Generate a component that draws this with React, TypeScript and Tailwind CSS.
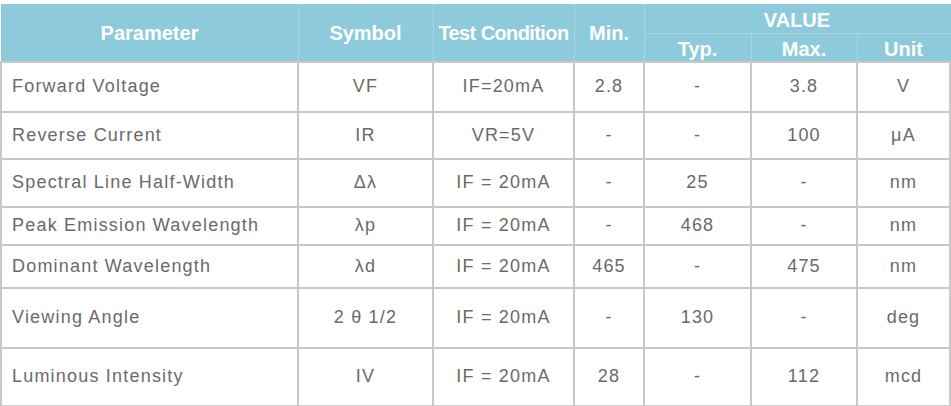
import React from 'react';

const rows = [
  { name: 'Forward Voltage', sym: 'VF', cond: 'IF=20mA', min: '2.8', typ: '-', max: '3.8', unit: 'V', h: 'h-[50px]' },
  { name: 'Reverse Current', sym: 'IR', cond: 'VR=5V', min: '-', typ: '-', max: '100', unit: 'μA', h: 'h-[47px]' },
  { name: 'Spectral Line Half-Width', sym: 'Δλ', cond: 'IF = 20mA', min: '-', typ: '25', max: '-', unit: 'nm', h: 'h-[48px]' },
  { name: 'Peak Emission Wavelength', sym: 'λp', cond: 'IF = 20mA', min: '-', typ: '468', max: '-', unit: 'nm', h: 'h-[38px]' },
  { name: 'Dominant Wavelength', sym: 'λd', cond: 'IF = 20mA', min: '465', typ: '-', max: '475', unit: 'nm', h: 'h-[43px]' },
  { name: 'Viewing Angle', sym: '2 θ 1/2', cond: 'IF = 20mA', min: '-', typ: '130', max: '-', unit: 'deg', h: 'h-[60px]' },
  { name: 'Luminous Intensity', sym: 'IV', cond: 'IF = 20mA', min: '28', typ: '-', max: '112', unit: 'mcd', h: 'h-[58px]' },
];

const th = 'border border-[#a9d4e0] font-bold text-white text-[20px] leading-none p-0 text-center';
const td = 'border-2 border-[#c8c8c8] p-0 text-center';

const App = () => {
  return (
    <div className="w-[951px] h-[406px] bg-white pt-1 font-['Liberation_Sans',Arial,sans-serif]">
      <table className="w-[949px] table-fixed border-collapse">
        <colgroup>
          <col className="w-[297px]" />
          <col className="w-[135px]" />
          <col className="w-[141px]" />
          <col className="w-[70px]" />
          <col className="w-[107px]" />
          <col className="w-[106px]" />
          <col className="w-[93px]" />
        </colgroup>
        <thead className="bg-[#8dcadb]">
          <tr className="h-[29px]">
            <th rowSpan={2} className={`${th} border-l-[#8dcadb] border-t-[#8dcadb]`}>Parameter</th>
            <th rowSpan={2} className={`${th} border-t-[#8dcadb]`}>Symbol</th>
            <th rowSpan={2} className={`${th} border-t-[#8dcadb] tracking-[-0.6px]`}>Test Condition</th>
            <th rowSpan={2} className={`${th} border-t-[#8dcadb]`}>Min.</th>
            <th colSpan={3} className={`${th} border-t-[#8dcadb] border-r-[#8dcadb] pt-[2px]`}>VALUE</th>
          </tr>
          <tr className="h-[28px]">
            <th className={`${th} pt-[4px]`}>Typ.</th>
            <th className={`${th} pt-[4px]`}>Max.</th>
            <th className={`${th} border-r-[#8dcadb] pt-[4px]`}>Unit</th>
          </tr>
        </thead>
        <tbody className="text-[18px] tracking-[1.2px] text-[#6a6a6a]">
          {rows.map((r) => (
            <tr key={r.name} className={r.h}>
              <td className={`${td} text-left pl-[10px]`}>{r.name}</td>
              <td className={td}>{r.sym}</td>
              <td className={td}>{r.cond}</td>
              <td className={td}>{r.min}</td>
              <td className={td}>{r.typ}</td>
              <td className={td}>{r.max}</td>
              <td className={td}>{r.unit}</td>
            </tr>
          ))}
        </tbody>
      </table>
    </div>
  );
};

export default App;
